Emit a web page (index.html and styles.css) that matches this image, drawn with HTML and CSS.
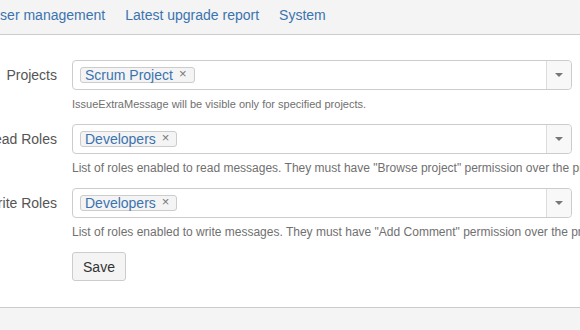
FILE: index.html
```html
<!DOCTYPE html>
<html>
<head>
    <title>IssueExtraMessage Configuration</title>
    <link rel="stylesheet" href="styles.css">
</head>
<body>
    <div class="nav">
        <a href="#">User management</a>
        <a href="#">Latest upgrade report</a>
        <a href="#">System</a>
    </div>

    <div class="content">
        <!-- Projects -->
        <div class="field-group">
            <label class="field-label">Projects</label>
            <div class="field">
                <div class="select-box">
                    <div class="select-tags">
                        <span class="tag">Scrum Project<span class="tag-remove">×</span></span>
                    </div>
                    <div class="select-arrow"><span class="caret"></span></div>
                </div>
                <div class="help help-small">IssueExtraMessage will be visible only for specified projects.</div>
            </div>
        </div>

        <!-- Read roles -->
        <div class="field-group">
            <label class="field-label">Read Roles</label>
            <div class="field">
                <div class="select-box">
                    <div class="select-tags">
                        <span class="tag">Developers<span class="tag-remove">×</span></span>
                    </div>
                    <div class="select-arrow"><span class="caret"></span></div>
                </div>
                <div class="help">List of roles enabled to read messages. They must have "Browse project" permission over the project.</div>
            </div>
        </div>

        <!-- Write roles -->
        <div class="field-group">
            <label class="field-label">Write Roles</label>
            <div class="field">
                <div class="select-box">
                    <div class="select-tags">
                        <span class="tag">Developers<span class="tag-remove">×</span></span>
                    </div>
                    <div class="select-arrow"><span class="caret"></span></div>
                </div>
                <div class="help">List of roles enabled to write messages. They must have "Add Comment" permission over the project.</div>
            </div>
        </div>

        <div class="buttons">
            <button class="btn">Save</button>
        </div>
    </div>

    <div class="footer"></div>
</body>
</html>
```

FILE: styles.css
```css
body {
    margin: 0;
    font-family: "Liberation Sans", Arial, sans-serif;
    font-size: 14px;
    color: #333;
    overflow: hidden;
    background: #fff;
}

.nav {
    display: flex;
    gap: 20px;
    height: 34px;
    align-items: center;
    margin-left: -10px;
    background: #f4f4f4;
    border-bottom: 1px solid #ccc;
}

.nav a {
    color: #3b73af;
    text-decoration: none;
    font-size: 14px;
    line-height: 20px;
    margin-top: -4px;
}

.content {
    padding: 25px 0 26px 0;
}

.field-group {
    display: flex;
    margin-bottom: 12px;
}

.field-label {
    flex: 0 0 100px;
    margin-left: -43px;
    padding-right: 15px;
    text-align: right;
    line-height: 30px;
    color: #555;
}

.field {
    width: 500px;
    flex: 0 0 500px;
}

.select-box {
    display: flex;
    height: 28px;
    border: 1px solid #ccc;
    border-radius: 4px;
    background: #fff;
}

.select-tags {
    flex: 1;
    display: flex;
    align-items: center;
    padding-left: 7px;
}

.tag {
    display: inline-flex;
    align-items: center;
    height: 14px;
    line-height: 14px;
    padding: 0 7px 0 4px;
    border: 1px solid #ccc;
    border-radius: 3px;
    background: #f4f4f4;
    color: #3b73af;
    font-size: 14px;
}

.tag-remove {
    color: #777;
    font-size: 13px;
    margin-left: 6px;
    margin-top: -3px;
}

.select-arrow {
    width: 24px;
    display: flex;
    align-items: center;
    justify-content: center;
    border-left: 1px solid #ddd;
    background: #f8f8f8;
    border-radius: 0 4px 4px 0;
}

.caret {
    width: 0;
    height: 0;
    border-left: 4px solid transparent;
    border-right: 4px solid transparent;
    border-top: 4px solid #777;
}

.help {
    margin-top: 6px;
    font-size: 12px;
    line-height: 16px;
    color: #707070;
    white-space: nowrap;
}

.help-small {
    font-size: 11px;
}

.buttons {
    padding-left: 72px;
}

.btn {
    height: 29px;
    width: 54px;
    padding: 0;
    font-family: "Liberation Sans", Arial, sans-serif;
    font-size: 14px;
    color: #333;
    background: #f4f4f4;
    border: 1px solid #ccc;
    border-radius: 3px;
}

.footer {
    height: 30px;
    background: #f4f4f4;
    border-top: 1px solid #ccc;
}
```
